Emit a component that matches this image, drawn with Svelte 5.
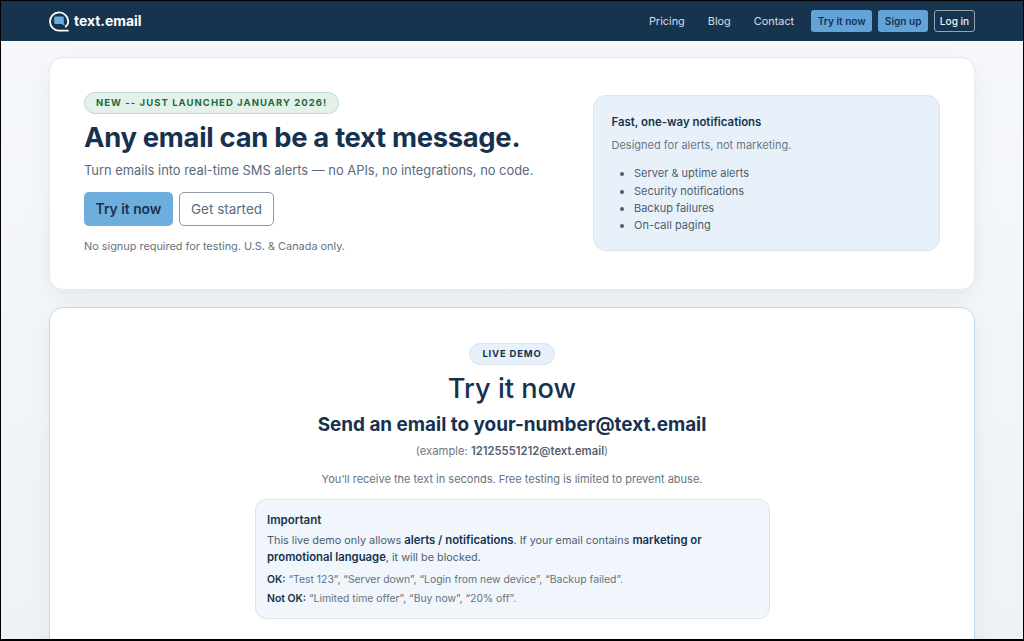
<script lang="ts">
  const alerts = ['Server & uptime alerts', 'Security notifications', 'Backup failures', 'On-call paging'];
</script>

<div class="page">
  <header>
    <a class="brand" href="#top">
      <svg width="20" height="21" viewBox="0 0 20 21" aria-hidden="true">
        <path d="M19 19.6h-8.6A9.1 9.1 0 1 1 19.2 10.5c0 2.2-.9 3.8-2.4 5" fill="none" stroke="#fff" stroke-width="1.8" stroke-linecap="round"/>
        <path d="M6.4 5.6h7.2a1.2 1.2 0 0 1 1.2 1.2v5l1 2.9-3.4-1.7h-6a1.2 1.2 0 0 1-1.2-1.2v-5a1.2 1.2 0 0 1 1.2-1.2z" fill="#6aaede"/>
      </svg>
      <span>text.email</span>
    </a>
    <nav>
      <a href="#pricing">Pricing</a>
      <a href="#blog">Blog</a>
      <a href="#contact">Contact</a>
      <div class="actions">
        <a class="btn-sm solid" href="#try">Try it now</a>
        <a class="btn-sm solid" href="#signup">Sign up</a>
        <a class="btn-sm outline" href="#login">Log in</a>
      </div>
    </nav>
  </header>

  <main>
    <section class="card hero">
      <div class="intro">
        <span class="tag">NEW -- JUST LAUNCHED JANUARY 2026!</span>
        <h1>Any email can be a text message.</h1>
        <p class="lead">Turn emails into real-time SMS alerts — no APIs, no integrations, no code.</p>
        <div class="cta">
          <a class="btn primary" href="#try">Try it now</a>
          <a class="btn ghost" href="#start">Get started</a>
        </div>
        <p class="fine">No signup required for testing. U.S. &amp; Canada only.</p>
      </div>
      <aside>
        <h3>Fast, one-way notifications</h3>
        <p>Designed for alerts, not marketing.</p>
        <ul>
          {#each alerts as a}
            <li>{a}</li>
          {/each}
        </ul>
      </aside>
    </section>

    <section class="card demo">
      <span class="live">LIVE DEMO</span>
      <h2>Try it now</h2>
      <h3>Send an email to your-number@text.email</h3>
      <p class="example">(example: <strong>12125551212@text.email</strong>)</p>
      <p class="receive">You’ll receive the text in seconds. Free testing is limited to prevent abuse.</p>
      <div class="notice">
        <h4>Important</h4>
        <p class="rule">This live demo only allows <strong>alerts / notifications</strong>. If your email contains <strong>marketing or promotional language</strong>, it will be blocked.</p>
        <p class="eg"><strong>OK:</strong> “Test 123”, “Server down”, “Login from new device”, “Backup failed”.</p>
        <p class="eg second"><strong>Not OK:</strong> “Limited time offer”, “Buy now”, “20% off”.</p>
      </div>
    </section>
  </main>
</div>

<style>
  :global(body) {
    margin: 0;
    background: #f4f7fb;
    font-family: Inter, "Liberation Sans", sans-serif;
    color: #16324f;
  }
  .page {
    box-sizing: border-box;
    height: 641px;
    overflow: hidden;
    border: solid #000;
    border-width: 1px 1px 2px 1px;
    background: linear-gradient(180deg, #f6f8fc 0%, #eef2f7 100%);
  }
  a { text-decoration: none; }
  header {
    height: 40px;
    background: #17344f;
    display: flex;
    align-items: center;
    justify-content: space-between;
    padding: 0 48px;
  }
  .brand {
    display: flex;
    align-items: center;
    gap: 5px;
    color: #fff;
    font-size: 13.9px;
    font-weight: 700;
  }
  nav { display: flex; align-items: center; gap: 23px; }
  nav > a { color: #d5dee8; font-size: 10.9px; }
  .actions { display: flex; gap: 6px; margin-left: -6px; }
  .btn-sm {
    box-sizing: border-box;
    height: 22px;
    display: flex;
    align-items: center;
    padding: 0 6.5px;
    border-radius: 3px;
    font-size: 10.1px;
    font-weight: 600;
  }
  .solid { background: #62a4d8; color: #16324f; }
  .outline { border: 1px solid #93a3b4; color: #eef2f7; font-weight: 500; padding: 0 4.8px; }
  main {
    padding: 16px 48px;
    display: flex;
    flex-direction: column;
    gap: 17px;
  }
  .card {
    background: #fff;
    border: 1px solid #e6ebf1;
    border-radius: 14px;
    box-shadow: 0 8px 24px rgba(22, 50, 79, 0.06);
  }
  .hero {
    box-sizing: border-box;
    height: 233px;
    padding: 34px 34px 0;
    display: flex;
    justify-content: space-between;
    align-items: flex-start;
  }
  .intro { display: flex; flex-direction: column; align-items: flex-start; }
  .tag {
    padding: 0 11px;
    height: 20px;
    line-height: 20px;
    border: 1px solid #bcdccb;
    border-radius: 11px;
    background: #e3f1ea;
    color: #1c6b41;
    font-size: 9.5px;
    font-weight: 700;
    letter-spacing: 1.05px;
  }
  h1 {
    margin: 5px 0 0;
    font-size: 27.4px;
    line-height: 36px;
    font-weight: 700;
    letter-spacing: -0.3px;
  }
  .lead { margin: 6px 0 0; font-size: 12.9px; line-height: 20px; color: #5b6b7c; }
  .cta { display: flex; gap: 6px; margin-top: 11px; }
  .btn {
    box-sizing: border-box;
    height: 34px;
    display: flex;
    align-items: center;
    justify-content: center;
    border-radius: 5px;
  }
  .primary { width: 89px; background: #6eaedd; color: #16324f; font-size: 13.8px; font-weight: 600; }
  .ghost { width: 95px; background: #fff; border: 1px solid #8d99a6; color: #5b6b7c; font-size: 13.5px; }
  .fine { margin: 12px 0 0; font-size: 10.9px; line-height: 16px; color: #66737f; }
  aside {
    box-sizing: border-box;
    width: 347px;
    height: 155.5px;
    margin-top: 3px;
    padding: 18px 17.5px 0;
    background: #e8f1fa;
    border: 1px solid #d8e5f1;
    border-radius: 13px;
  }
  aside h3 { margin: 0; font-size: 11.4px; line-height: 16px; font-weight: 600; }
  aside p { margin: 7px 0 0; font-size: 11px; line-height: 16px; color: #6c7885; }
  aside ul { margin: 12.4px 0 0; padding: 0 0 0 22.5px; }
  aside li { font-size: 11px; line-height: 17.2px; color: #4c5d6e; }
  .demo {
    border-color: #bfdcf2;
    display: flex;
    flex-direction: column;
    align-items: center;
    padding-top: 35px;
    height: 400px;
    box-sizing: border-box;
    flex: none;
  }
  .live {
    height: 20px;
    line-height: 20px;
    padding: 0 12px;
    border: 1px solid #d8e5f1;
    border-radius: 11px;
    background: #e8f1fa;
    font-size: 9.5px;
    font-weight: 700;
    letter-spacing: 0.8px;
  }
  h2 { margin: 5px 0 0; font-size: 27.2px; line-height: 38px; font-weight: 500; }
  .demo h3 { margin: 4px 0 0; font-size: 18.9px; line-height: 26px; font-weight: 700; }
  .example { margin: 5px 0 0; font-size: 11.25px; line-height: 16px; color: #6c7885; }
  .example strong { color: #54636f; font-weight: 600; }
  .receive { margin: 12px 0 0; font-size: 11px; line-height: 16px; color: #66737f; }
  .notice {
    box-sizing: border-box;
    width: 515px;
    height: 119.5px;
    margin-top: 12px;
    padding: 12px 11.5px 0;
    background: #f0f6fc;
    border: 1px solid #d8e5f1;
    border-radius: 11px;
  }
  h4 { margin: 0; font-size: 11.5px; line-height: 16px; font-weight: 600; }
  .rule { margin: 3.5px 0 0; font-size: 10.85px; line-height: 17px; color: #4c5d6e; }
  .rule strong { font-size: 11.3px; }
  .rule strong, .eg strong { color: #16324f; font-weight: 600; }
  .eg { margin: 6px 0 0; font-size: 10.4px; line-height: 15px; color: #66737f; }
  .eg.second { margin-top: 4px; }
</style>
